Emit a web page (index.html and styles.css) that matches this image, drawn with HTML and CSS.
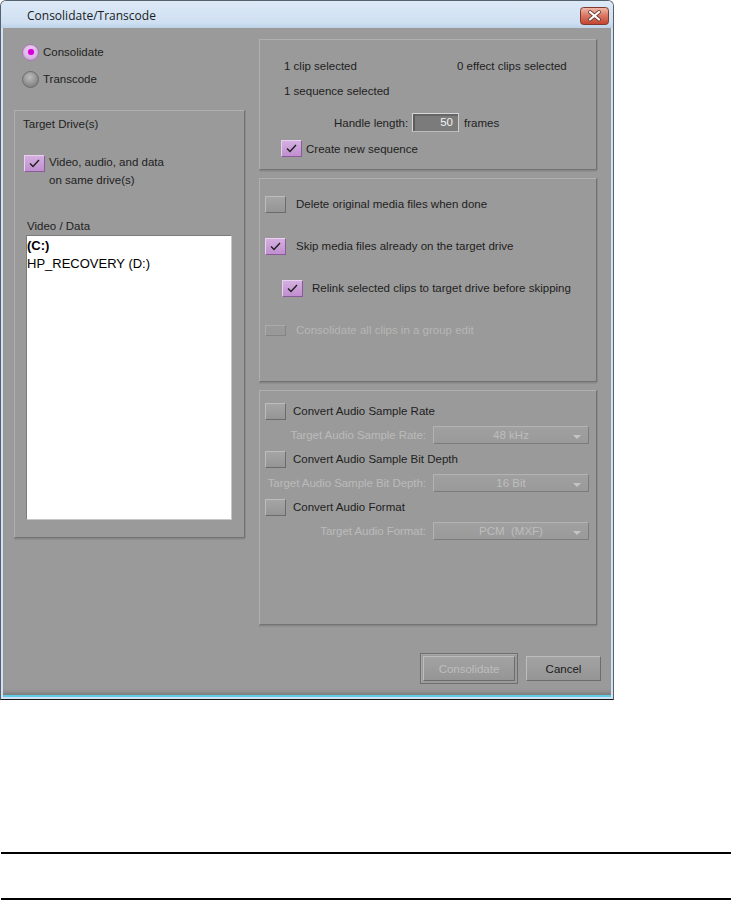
FILE: index.html
```html
<!DOCTYPE html>
<html>
<head>
<meta charset="utf-8">
<title>Consolidate/Transcode</title>
<link rel="stylesheet" href="styles.css">
</head>
<body>
<div class="window">
  <div class="titlebar">
    <span class="title">Consolidate/Transcode</span>
    <svg class="close" width="29" height="18" viewBox="0 0 29 18">
      <defs>
        <linearGradient id="cg" x1="0" y1="0" x2="0" y2="1">
          <stop offset="0" stop-color="#f0bcae"/>
          <stop offset="0.45" stop-color="#db7a66"/>
          <stop offset="1" stop-color="#c4432e"/>
        </linearGradient>
      </defs>
      <rect x="0.5" y="0.5" width="28" height="17" rx="3" fill="url(#cg)" stroke="#7d3a30"/>
      <path d="M10 5 L19 12.5 M19 5 L10 12.5" stroke="#6a3a34" stroke-width="3.8" stroke-linecap="round"/>
      <path d="M10 5 L19 12.5 M19 5 L10 12.5" stroke="#ffffff" stroke-width="2.2" stroke-linecap="round"/>
    </svg>
  </div>
  <div class="client">
    <div class="main">
      <div class="left-col">
        <div class="radios">
          <div class="radio-row"><span class="radio on"></span><span>Consolidate</span></div>
          <div class="radio-row"><span class="radio"></span><span>Transcode</span></div>
        </div>
        <div class="panel drives">
          <div class="panel-title">Target Drive(s)</div>
          <div class="same-drive">
            <span class="cb checked"><svg width="19" height="15" viewBox="0 0 19 15"><path d="M5 7.5 L8 10.5 L14 4" fill="none" stroke="#1e1e1e" stroke-width="1.4"/></svg></span>
            <span class="txt">Video, audio, and data<br>on same drive(s)</span>
          </div>
          <div class="list-label">Video / Data</div>
          <div class="listbox">
            <div class="item bold">(C:)</div>
            <div class="item">HP_RECOVERY (D:)</div>
          </div>
        </div>
      </div>
      <div class="right-col">
        <div class="panel sel">
          <div class="row1"><span class="c1">1 clip selected</span><span>0 effect clips selected</span></div>
          <div class="row2">1 sequence selected</div>
          <div class="handle"><span class="lbl">Handle length:</span><span class="num">50</span><span class="frames">frames</span></div>
          <div class="cnew">
            <span class="cb checked"><svg width="19" height="15" viewBox="0 0 19 15"><path d="M5 7.5 L8 10.5 L14 4" fill="none" stroke="#1e1e1e" stroke-width="1.4"/></svg></span>
            <span>Create new sequence</span>
          </div>
        </div>
        <div class="panel opts">
          <div class="opt"><span class="cb"></span><span>Delete original media files when done</span></div>
          <div class="opt"><span class="cb checked"><svg width="19" height="15" viewBox="0 0 19 15"><path d="M5 7.5 L8 10.5 L14 4" fill="none" stroke="#1e1e1e" stroke-width="1.4"/></svg></span><span>Skip media files already on the target drive</span></div>
          <div class="opt indent"><span class="cb checked"><svg width="19" height="15" viewBox="0 0 19 15"><path d="M5 7.5 L8 10.5 L14 4" fill="none" stroke="#1e1e1e" stroke-width="1.4"/></svg></span><span>Relink selected clips to target drive before skipping</span></div>
          <div class="opt disabled"><span class="cb dis"></span><span>Consolidate all clips in a group edit</span></div>
        </div>
        <div class="panel audio">
          <div class="arow"><span class="cb"></span><span>Convert Audio Sample Rate</span></div>
          <div class="alabel"><span>Target Audio Sample Rate:</span></div>
          <div class="select"><span>48 kHz</span><span class="arrow"></span></div>
          <div class="arow"><span class="cb"></span><span>Convert Audio Sample Bit Depth</span></div>
          <div class="alabel"><span>Target Audio Sample Bit Depth:</span></div>
          <div class="select"><span>16 Bit</span><span class="arrow"></span></div>
          <div class="arow"><span class="cb"></span><span>Convert Audio Format</span></div>
          <div class="alabel"><span>Target Audio Format:</span></div>
          <div class="select"><span>PCM&nbsp;&nbsp;(MXF)</span><span class="arrow"></span></div>
        </div>
      </div>
    </div>
    <div class="buttons">
      <div class="btn-default"><div class="btn disabled-btn">Consolidate</div></div>
      <div class="btn cancel">Cancel</div>
    </div>
  </div>
</div>
<div class="rule rule1"></div>
<div class="rule rule2"></div>
</body>
</html>
```
FILE: styles.css
```css
* { box-sizing: border-box; }
html, body { margin: 0; padding: 0; background: #ffffff; }
body {
  font-family: "Liberation Sans", Arial, sans-serif;
  font-size: 11.5px;
  color: #1e1e1e;
}

.window {
  width: 614px;
  height: 700px;
  border: 1px solid #56616d;
  border-bottom-color: #151515;
  border-radius: 6px 6px 0 0;
  background: #d2e2f3;
  display: flex;
  flex-direction: column;
  overflow: hidden;
}

.titlebar {
  height: 27px;
  flex: none;
  display: flex;
  align-items: center;
  justify-content: space-between;
  padding: 0 4px 0 26px;
  background: linear-gradient(#dce9f7, #cfe0f2 80%, #bdd1e6);
  font-family: "Open Sans", "Noto Sans", sans-serif;
  font-size: 12px;
  color: #1b1b1b;
}
.title { margin-top: 1px; }
.close { display: block; margin-top: 2px; }

.client {
  margin: 0 2px;
  height: 669px;
  flex: none;
  background: #9a9a9a;
  border-bottom: 2px solid #5fcbe4;
  box-shadow: inset 0 -5px 4px -3px #777777;
  display: flex;
  flex-direction: column;
}

.main {
  display: flex;
  padding-left: 11px;
  gap: 14px;
}

.left-col { width: 231px; }

.radios {
  padding: 15px 0 0 8px;
  display: flex;
  flex-direction: column;
  gap: 9px;
}
.radio-row {
  display: flex;
  align-items: center;
  gap: 4px;
  height: 18px;
}
.radio {
  width: 17px;
  height: 17px;
  border-radius: 50%;
  border: 1px solid #6c6c6c;
  background: radial-gradient(circle at 45% 35%, #bdbdbd 0%, #8e8e8e 60%, #6c6c6c 100%);
  display: flex;
  align-items: center;
  justify-content: center;
}
.radio.on {
  border-color: #a27ab0;
  background: radial-gradient(circle at 50% 40%, #f4e2f7 0%, #dcb8e6 55%, #b78cc6 100%);
}
.radio.on::after {
  content: "";
  width: 6px;
  height: 6px;
  border-radius: 50%;
  background: #d100d4;
  box-shadow: 0 0 2px #ff4dff;
}

.panel {
  border: 1px solid;
  border-color: #b0b0b0 #737373 #737373 #b0b0b0;
  box-shadow: 0 1px 0 #868686, 1px 0 0 #8a8a8a, 0 2px 0 #909090;
}

.drives {
  height: 428px;
  margin-top: 22px;
  padding: 6px 0 0 8px;
}
.panel-title { line-height: 14px; }
.same-drive {
  display: flex;
  align-items: flex-start;
  gap: 4px;
  margin: 22px 0 0 1px;
}
.same-drive .cb { margin-top: 2px; }
.same-drive .txt { line-height: 18px; }
.list-label {
  margin: 30px 0 0 4px;
  line-height: 14px;
}
.listbox {
  margin: 2px 0 0 3px;
  width: 206px;
  height: 285px;
  background: #ffffff;
  border: 1px solid;
  border-color: #7c7c7c #c6c6c6 #c6c6c6 #7c7c7c;
  padding-top: 1px;
  font-size: 13px;
  color: #000;
}
.item { line-height: 18px; padding-left: 0; }
.item.bold { font-weight: bold; }

.cb {
  flex: none;
  width: 21px;
  height: 17px;
  border: 1px solid;
  border-color: #bcbcbc #6b6b6b #6b6b6b #bcbcbc;
  background: linear-gradient(#a5a5a5, #959595);
  display: flex;
  align-items: center;
  justify-content: center;
}
.cb.checked {
  border-color: #e8d0ef #8a5a9a #8a5a9a #e8d0ef;
  background: linear-gradient(#d5afe0, #c08fcf);
}
.cb svg { display: block; }
.cb.dis {
  height: 11px;
  border-color: #ababab #848484 #848484 #ababab;
  background: #999999;
}

.right-col {
  width: 338px;
  padding-top: 11px;
  display: flex;
  flex-direction: column;
  gap: 8px;
}

.sel {
  height: 131px;
  padding: 19px 0 0 24px;
}
.row1 { display: flex; line-height: 14px; }
.row1 .c1 { width: 173px; }
.row2 { margin-top: 11px; line-height: 14px; }
.handle {
  display: flex;
  align-items: center;
  height: 19px;
  margin: 15px 0 0 50px;
}
.handle .lbl { width: 78px; }
.num {
  width: 47px;
  height: 19px;
  border: 1px solid;
  border-color: #d6d6d6 #d0d0d0 #bdbdbd #d6d6d6;
  box-shadow: inset 2px 0 0 #5c5c5c, inset 0 2px 0 #666666;
  background: #7b7b7b;
  color: #f2f2f2;
  text-align: right;
  padding-right: 5px;
  line-height: 17px;
}
.frames { margin-left: 5px; }
.cnew {
  display: flex;
  align-items: center;
  gap: 4px;
  margin: 8px 0 0 -3px;
  height: 17px;
}

.opts {
  height: 204px;
  padding: 16px 0 0 5px;
  display: flex;
  flex-direction: column;
  gap: 24px;
}
.opt {
  display: flex;
  align-items: center;
  height: 18px;
  gap: 10px;
}
.opt.indent { margin-left: 17px; gap: 9px; }
.opt.disabled { color: #b6b6b6; }

.audio {
  height: 235px;
  padding: 8px 0 0 5px;
  display: grid;
  grid-template-columns: 161px 156px;
  column-gap: 7px;
  grid-auto-rows: 24px;
  align-content: start;
}
.arow {
  grid-column: 1 / -1;
  display: flex;
  align-items: center;
  gap: 7px;
}
.alabel {
  align-self: center;
  display: flex;
  justify-content: flex-end;
  white-space: nowrap;
  color: #bababa;
  letter-spacing: -0.05px;
}
.select {
  align-self: center;
  height: 18px;
  border: 1px solid;
  border-color: #b3b3b3 #7b7b7b #7b7b7b #b3b3b3;
  background: linear-gradient(#a0a0a0, #9a9a9a);
  color: #bdbdbd;
  display: flex;
  align-items: center;
  justify-content: center;
  position: relative;
}
.arrow {
  position: absolute;
  right: 7px;
  top: 8px;
  width: 0;
  height: 0;
  border-left: 4px solid transparent;
  border-right: 4px solid transparent;
  border-top: 4px solid #c4c4c4;
}

.buttons {
  display: flex;
  justify-content: flex-end;
  align-items: center;
  gap: 8px;
  padding-right: 10px;
  margin-top: 28px;
  height: 31px;
}
.btn-default {
  width: 98px;
  height: 31px;
  border: 1px solid #6e6e6e;
  box-shadow: inset 1px 1px 0 #a8a8a8;
  padding: 2px;
}
.btn {
  border: 1px solid;
  border-color: #bdbdbd #6c6c6c #6c6c6c #bdbdbd;
  background: linear-gradient(#a3a3a3, #959595);
  display: flex;
  align-items: center;
  justify-content: center;
}
.disabled-btn {
  width: 100%;
  height: 100%;
  color: #bebebe;
}
.cancel {
  width: 75px;
  height: 25px;
  color: #1a1a1a;
}

.rule {
  height: 2px;
  background: #000000;
  margin-left: 1px;
}
.rule1 { margin-top: 152px; }
.rule2 { margin-top: 44px; }
```
